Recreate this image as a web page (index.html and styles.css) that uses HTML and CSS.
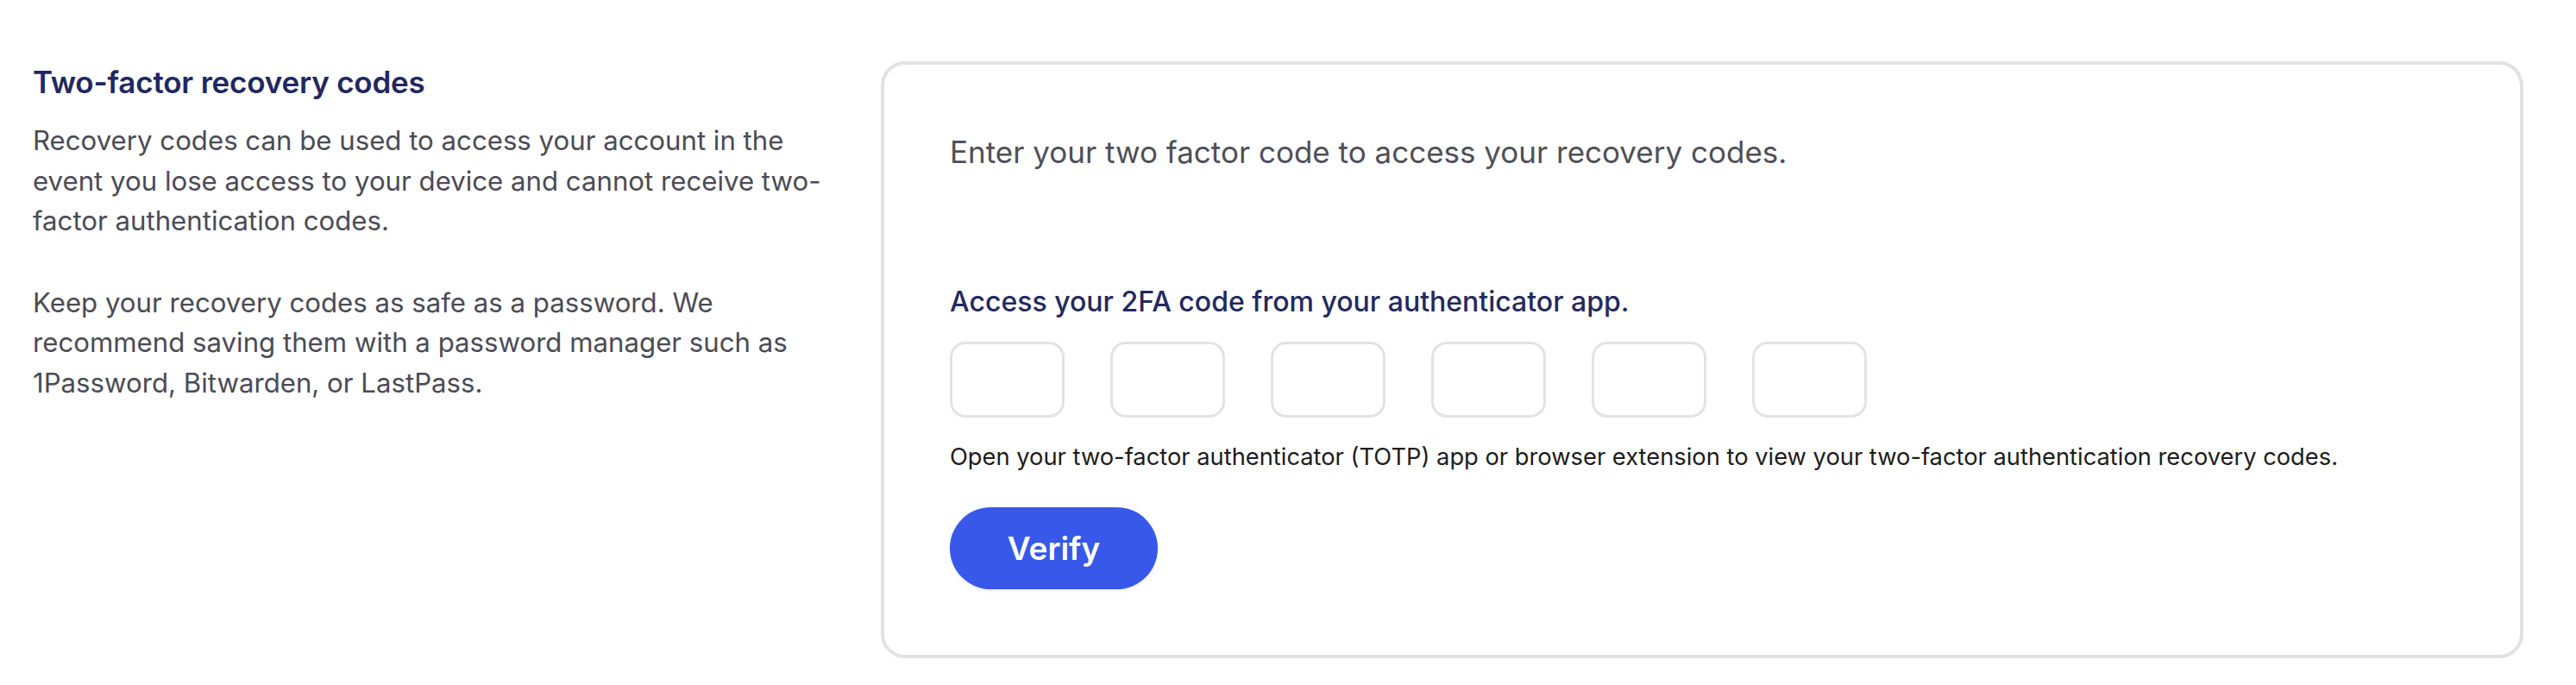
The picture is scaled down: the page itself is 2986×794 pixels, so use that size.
FILE: index.html
```html
<!DOCTYPE html>
<html lang="en">
<head>
<meta charset="utf-8">
<title>Two-factor recovery codes</title>
<link rel="stylesheet" href="styles.css">
</head>
<body>
<main class="section">
  <div class="intro">
    <h2 class="intro-title">Two-factor recovery codes</h2>
    <p class="intro-text">Recovery codes can be used to access your account in the event you lose access to your device and cannot receive two-factor authentication codes.</p>
    <p class="intro-text">Keep your recovery codes as safe as a password. We recommend saving them with a password manager such as 1Password, Bitwarden, or LastPass.</p>
  </div>
  <section class="card">
    <p class="card-lead">Enter your two factor code to access your recovery codes.</p>
    <label class="code-label" for="d1">Access your 2FA code from your authenticator app.</label>
    <div class="code-inputs">
      <input class="code-box" id="d1" type="text" maxlength="1" inputmode="numeric">
      <input class="code-box" type="text" maxlength="1" inputmode="numeric">
      <input class="code-box" type="text" maxlength="1" inputmode="numeric">
      <input class="code-box" type="text" maxlength="1" inputmode="numeric">
      <input class="code-box" type="text" maxlength="1" inputmode="numeric">
      <input class="code-box" type="text" maxlength="1" inputmode="numeric">
    </div>
    <p class="code-help">Open your two-factor authenticator (TOTP) app or browser extension to view your two-factor authentication recovery codes.</p>
    <button class="verify-btn" type="button">Verify</button>
  </section>
</main>
</body>
</html>
```

FILE: styles.css
```css
* { box-sizing: border-box; }

html, body {
  margin: 0;
  background: #ffffff;
}

body {
  font-family: Inter, "Noto Sans", sans-serif;
  padding: 71px 61px 0 38px;
}

.section {
  display: grid;
  grid-template-columns: 930px 1fr;
  column-gap: 53px;
  align-items: start;
}

.intro-title {
  margin: 0;
  font-size: 35px;
  line-height: 49px;
  font-weight: 600;
  color: #22285e;
  letter-spacing: -0.2px;
}

.intro-text {
  margin: 20px 0 0;
  font-size: 31.2px;
  line-height: 46.5px;
  font-weight: 400;
  color: #4b4b55;
}

.intro-text + .intro-text {
  margin-top: 48px;
}

.card {
  border: 4px solid #e2e2e2;
  border-radius: 28px;
  padding: 76px;
  display: flex;
  flex-direction: column;
  align-items: flex-start;
}

.card-lead {
  margin: 0 0 124px;
  font-size: 35px;
  line-height: 51px;
  color: #4f4f57;
}

.code-label {
  font-size: 32px;
  line-height: 48px;
  font-weight: 500;
  color: #24295e;
}

.code-inputs {
  display: flex;
  gap: 53px;
  margin-top: 22px;
}

.code-box {
  width: 133px;
  height: 88px;
  border: 3px solid #e3e3e3;
  border-radius: 18px;
  background: #fff;
  font: inherit;
  font-size: 36px;
  text-align: center;
  outline: none;
}

.code-help {
  margin: 26px 0 0;
  font-size: 27.3px;
  line-height: 40px;
  color: #1c1c1c;
}

.verify-btn {
  margin-top: 38px;
  width: 241px;
  height: 95px;
  border: none;
  border-radius: 48px;
  background: #3758e8;
  color: #ffffff;
  font-family: Inter, "Noto Sans", sans-serif;
  font-size: 37px;
  font-weight: 600;
  box-shadow: 0 2px 4px rgba(0, 0, 0, 0.08);
  cursor: pointer;
}
```
